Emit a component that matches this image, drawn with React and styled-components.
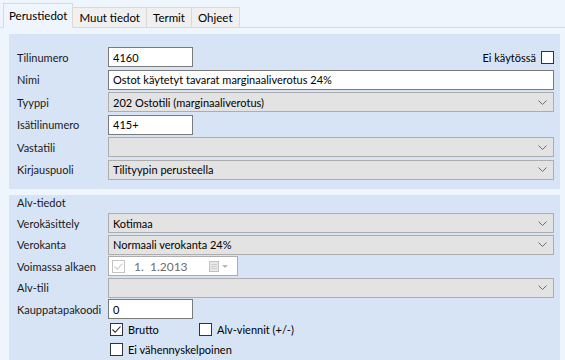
import React from "react"
import styled, { createGlobalStyle } from "styled-components"

const Global = createGlobalStyle`
  html, body {
    margin: 0;
    padding: 0;
    background: #eef5fc;
    font-family: Lato, "Liberation Sans", Arial, sans-serif;
    font-size: 11px;
    color: #1a1a1a;
  }
`

const Page = styled.div`
  width: 565px;
  height: 360px;
  overflow: hidden;
`

const TabBar = styled.div`
  display: flex;
  align-items: flex-end;
  height: 27px;
  padding-left: 3px;
  border-bottom: 1px solid #d9d9d9;
`

const Tab = styled.div`
  height: ${p => (p.active ? "23px" : "19px")};
  padding: 0 ${p => (p.active ? "5px" : "6px")};
  display: flex;
  align-items: center;
  background: ${p => (p.active ? "#eef5fc" : "#f0f0f0")};
  border: 1px solid #d9d9d9;
  border-bottom: ${p => (p.active ? "1px solid #eef5fc" : "none")};
  margin-bottom: ${p => (p.active ? "-1px" : "0")};
  margin-left: ${p => (p.active ? "0" : "-1px")};
  color: #000;
  font-size: 11.5px;
  white-space: nowrap;
`

const Content = styled.div`
  padding: 6px 5px 0 9px;
  display: flex;
  flex-direction: column;
  gap: 6px;
`

const Panel = styled.div`
  background: #d7e4f5;
  padding: ${p => p.pad};
  display: flex;
  flex-direction: column;
  gap: ${p => p.gap};
`

const GroupTitle = styled.div`
  padding-left: 8px;
  height: 14px;
  line-height: 12px;
  margin-bottom: 1px;
  color: #1a1a1a;
`

const Row = styled.div`
  display: flex;
  align-items: center;
  height: 20px;
  padding-left: 8px;
`

const Label = styled.div`
  width: 91px;
  flex: none;
  white-space: nowrap;
`

const TextBox = styled.div`
  box-sizing: border-box;
  height: 20px;
  width: ${p => p.w || "auto"};
  flex: ${p => (p.w ? "none" : "1")};
  background: #fff;
  border: 1px solid #7a7a7a;
  padding-left: 4px;
  display: flex;
  align-items: center;
  color: #000;
  white-space: nowrap;
`

const Combo = styled.div`
  box-sizing: border-box;
  height: 20px;
  flex: 1;
  background: #e3e3e3;
  border: 1px solid #adadad;
  padding: 0 6px 0 4px;
  display: flex;
  align-items: center;
  justify-content: space-between;
  color: #000;
`

const Chevron = () => (
  <svg width="9" height="5" viewBox="0 0 9 5">
    <path d="M0.5 0.5 L4.5 4.5 L8.5 0.5" fill="none" stroke="#6b6b6b" strokeWidth="1" />
  </svg>
)

const Spacer = styled.div`
  flex: 1;
`

const Box = styled.span`
  box-sizing: border-box;
  width: 13px;
  height: 13px;
  flex: none;
  border: 1px solid ${p => (p.disabled ? "#c4c4c4" : "#333")};
  background: #fff;
  display: inline-flex;
  align-items: center;
  justify-content: center;
`

const Check = ({ color }) => (
  <svg width="11" height="11" viewBox="0 0 11 11">
    <path d="M1.5 5.5 L4.2 8.3 L9.5 2.5" fill="none" stroke={color} strokeWidth="1.1" />
  </svg>
)

const CheckLabel = styled.label`
  display: inline-flex;
  align-items: center;
  gap: 5px;
  width: ${p => p.w || "auto"};
  color: #000;
  white-space: nowrap;
`

const DateBox = styled.div`
  box-sizing: border-box;
  height: 20px;
  width: 130px;
  background: #fff;
  border: 1px solid #adadad;
  display: flex;
  align-items: center;
  padding-left: 3px;
  gap: 9px;
  color: #6d6d6d;
`

const DateText = styled.span`
  flex: 1;
  font-size: 12px;
`

const CalIcon = () => (
  <svg width="22" height="12" viewBox="0 0 22 12" style={{ marginRight: 6 }}>
    <rect x="0.5" y="1.5" width="9" height="10" fill="#e8e8e8" stroke="#c2c2c2" />
    <path d="M2 4.5 H8 M2 6.5 H8 M2 8.5 H8" stroke="#cfcfcf" />
    <path d="M13 5 L19 5 L16 8 Z" fill="#b8b8b8" />
  </svg>
)

const CheckRow = styled.div`
  display: flex;
  align-items: center;
  height: 16px;
  padding-left: 101px;
  margin-top: ${p => p.mt || "0"};
`

export default function App() {
  return (
    <Page>
      <Global />
      <TabBar>
        <Tab active>Perustiedot</Tab>
        <Tab>Muut tiedot</Tab>
        <Tab>Termit</Tab>
        <Tab>Ohjeet</Tab>
      </TabBar>
      <Content>
        <Panel pad="13px 6px 9px 0" gap="2.6px">
          <Row>
            <Label>Tilinumero</Label>
            <TextBox w="85px">4160</TextBox>
            <Spacer />
            <CheckLabel>
              Ei käytössä
              <Box />
            </CheckLabel>
          </Row>
          <Row>
            <Label>Nimi</Label>
            <TextBox>Ostot käytetyt tavarat marginaaliverotus 24%</TextBox>
          </Row>
          <Row>
            <Label>Tyyppi</Label>
            <Combo>
              202 Ostotili (marginaaliverotus)
              <Chevron />
            </Combo>
          </Row>
          <Row>
            <Label>Isätilinumero</Label>
            <TextBox w="85px">415+</TextBox>
          </Row>
          <Row>
            <Label>Vastatili</Label>
            <Combo>
              <span />
              <Chevron />
            </Combo>
          </Row>
          <Row>
            <Label>Kirjauspuoli</Label>
            <Combo>
              Tilityypin perusteella
              <Chevron />
            </Combo>
          </Row>
        </Panel>
        <Panel pad="2px 6px 3px 0" gap="1.5px">
          <GroupTitle>Alv-tiedot</GroupTitle>
          <Row>
            <Label>Verokäsittely</Label>
            <Combo>
              Kotimaa
              <Chevron />
            </Combo>
          </Row>
          <Row>
            <Label>Verokanta</Label>
            <Combo>
              Normaali verokanta 24%
              <Chevron />
            </Combo>
          </Row>
          <Row>
            <Label>Voimassa alkaen</Label>
            <DateBox>
              <Box disabled>
                <Check color="#c8c8c8" />
              </Box>
              <DateText>1.&nbsp; 1.2013</DateText>
              <CalIcon />
            </DateBox>
          </Row>
          <Row>
            <Label>Alv-tili</Label>
            <Combo>
              <span />
              <Chevron />
            </Combo>
          </Row>
          <Row>
            <Label>Kauppatapakoodi</Label>
            <TextBox w="85px">0</TextBox>
          </Row>
          <CheckRow mt="1px">
            <CheckLabel w="89px">
              <Box>
                <Check color="#222" />
              </Box>
              Brutto
            </CheckLabel>
            <CheckLabel>
              <Box />
              Alv-viennit (+/-)
            </CheckLabel>
          </CheckRow>
          <CheckRow mt="2.5px">
            <CheckLabel>
              <Box />
              Ei vähennyskelpoinen
            </CheckLabel>
          </CheckRow>
        </Panel>
      </Content>
    </Page>
  )
}
